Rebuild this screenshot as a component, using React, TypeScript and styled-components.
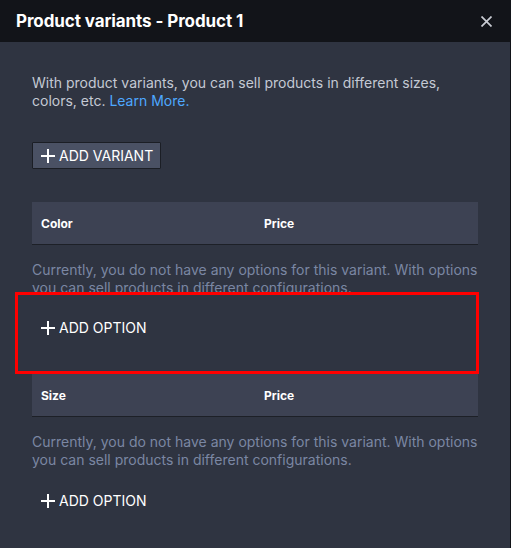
import React from "react";
import styled, { createGlobalStyle } from "styled-components";

const Global = createGlobalStyle`
  html, body { margin: 0; padding: 0; background: #111318; }
  body { font-family: Inter, "Noto Sans", sans-serif; -webkit-font-smoothing: antialiased; }
  * { box-sizing: border-box; }
`;

const Modal = styled.div`
  width: 510px;
  min-height: 100vh;
  background: #2f3441;
  display: flex;
  flex-direction: column;
`;

const Header = styled.header`
  height: 42px;
  background: #121419;
  display: flex;
  align-items: center;
  justify-content: space-between;
  padding: 0 14px 0 16px;
  margin-right: -1px;
`;

const Title = styled.h1`
  margin: 0;
  font-size: 17px;
  font-weight: 700;
  color: #ffffff;
  letter-spacing: -0.1px;
`;

const CloseButton = styled.button`
  border: 0;
  background: none;
  padding: 0;
  width: 21px;
  height: 21px;
  display: flex;
  align-items: center;
  justify-content: center;
  color: #c9ccd3;
  cursor: pointer;
`;

const Body = styled.div`
  padding: 32px 32px 34px 32px;
  display: flex;
  flex-direction: column;
`;

const Intro = styled.p`
  margin: 0;
  font-size: 14px;
  line-height: 18px;
  color: #c4c9d4;
`;

const Link = styled.a`
  color: #4ea8ff;
  text-decoration: none;
`;

const Button = styled.button<{ $ghost?: boolean }>`
  align-self: flex-start;
  height: 27px;
  display: flex;
  align-items: center;
  gap: 4px;
  padding: 0 7px 0 8px;
  font-family: inherit;
  font-size: 14px;
  color: #ffffff;
  background: ${(p) => (p.$ghost ? "transparent" : "#4a5164")};
  border: 1px solid ${(p) => (p.$ghost ? "transparent" : "#1b1e25")};
  border-radius: 1px;
  cursor: pointer;
  svg { flex: none; }
`;

const VariantButton = styled(Button)`
  margin-top: 32px;
`;

const TableHead = styled.div<{ $first?: boolean }>`
  margin-top: ${(p) => (p.$first ? "33px" : "0")};
  height: 43px;
  display: grid;
  grid-template-columns: 1fr 1fr;
  align-items: center;
  background: #3d4253;
  border-bottom: 1px solid #1d2027;
`;

const HeadCell = styled.div`
  padding: 0 9px;
  font-size: 12px;
  font-weight: 700;
  color: #ffffff;
`;

const EmptyText = styled.p`
  margin: 16px 0 0;
  font-size: 14px;
  line-height: 18px;
  color: #7b87a3;
`;

const OptionRow = styled.div<{ $highlight?: boolean }>`
  display: flex;
  position: relative;
  ${(p) =>
    p.$highlight
      ? `
    margin: -5px -1px 0 -17px;
    padding: 19px 0 30px 14px;
    border: 3px solid #ff0000;
    background: #2f3441;
  `
      : `
    margin-top: 18px;
  `}
`;

const PlusIcon = () => (
  <svg width="14" height="14" viewBox="0 0 14 14" aria-hidden="true">
    <path d="M7 0v14M0 7h14" stroke="currentColor" strokeWidth="2" fill="none" />
  </svg>
);

const CloseIcon = () => (
  <svg width="11" height="11" viewBox="0 0 11 11" aria-hidden="true">
    <path d="M0.5 0.5l10 10M10.5 0.5l-10 10" stroke="currentColor" strokeWidth="1.7" fill="none" />
  </svg>
);

const variants = [
  { name: "Color", highlight: true },
  { name: "Size", highlight: false },
];

export default function App() {
  return (
    <>
      <Global />
      <Modal>
        <Header>
          <Title>Product variants - Product 1</Title>
          <CloseButton aria-label="Close">
            <CloseIcon />
          </CloseButton>
        </Header>
        <Body>
          <Intro>
            With product variants, you can sell products in different sizes,
            colors, etc. <Link href="#">Learn More.</Link>
          </Intro>
          <VariantButton>
            <PlusIcon />
            ADD VARIANT
          </VariantButton>
          {variants.map((v, i) => (
            <React.Fragment key={v.name}>
              <TableHead $first={i === 0}>
                <HeadCell>{v.name}</HeadCell>
                <HeadCell>Price</HeadCell>
              </TableHead>
              <EmptyText>
                Currently, you do not have any options for this variant. With
                options you can sell products in different configurations.
              </EmptyText>
              <OptionRow $highlight={v.highlight}>
                <Button $ghost>
                  <PlusIcon />
                  ADD OPTION
                </Button>
              </OptionRow>
            </React.Fragment>
          ))}
        </Body>
      </Modal>
    </>
  );
}
